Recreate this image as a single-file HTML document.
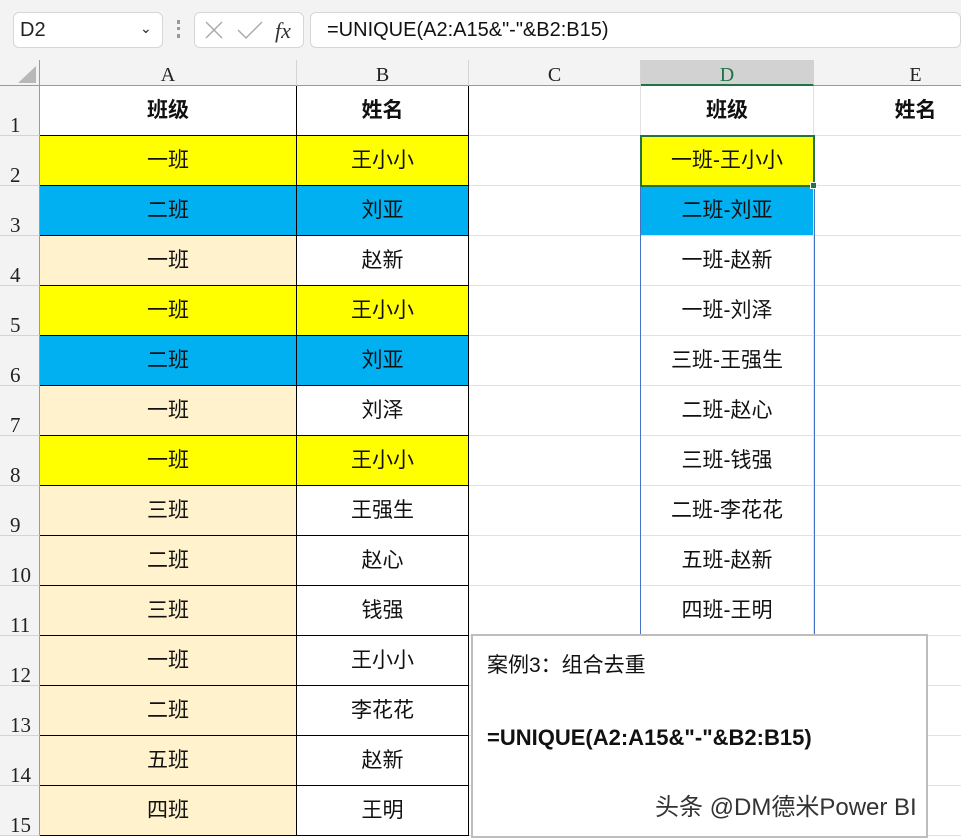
<!DOCTYPE html>
<html><head><meta charset="utf-8"><style>
*{margin:0;padding:0;box-sizing:border-box}
body{width:961px;height:838px;background:#fff;position:relative;overflow:hidden;font-family:"Liberation Sans","Noto Sans CJK SC",sans-serif}
.a{position:absolute}
.top{left:0;top:0;width:961px;height:60px;background:#f3f3f3}
.box{background:#fff;border:1px solid #d6d6d6;border-radius:6px}
.ch{top:60px;height:26px;background:#f3f3f3;border-right:1px solid #d4d4d4;border-bottom:1px solid #9a9a9a;text-align:center;font-family:"Liberation Serif",serif;font-size:20px;line-height:30px;color:#222}
.rh{left:0;width:40px;height:50px;background:#f3f3f3;border-bottom:1px solid #d4d4d4;border-right:1px solid #9a9a9a;font-family:"Liberation Serif",serif;font-size:21px;color:#222;padding-left:10px;padding-top:27px}
.c{height:50px;text-align:center;font-size:21px;line-height:50px;color:#111}
.g{border-bottom:1px solid #e1e1e1;border-right:1px solid #e1e1e1}
.k{border-bottom:1px solid #000;border-right:1px solid #000}
b{font-weight:bold}
</style></head><body>
<div class="a top"></div>
<div class="a box" style="left:13px;top:12px;width:150px;height:36px;font-size:20px;line-height:34px;padding-left:6px;color:#222">D2<span class="a" style="left:126px;top:-2px;font-size:14px">&#8964;</span></div>
<div class="a" style="left:177px;top:20px;width:3px;height:18px;border-left:3px dotted #999"></div>
<div class="a box" style="left:194px;top:12px;width:110px;height:36px"></div>
<svg class="a" style="left:200px;top:18px" width="100" height="26"><path d="M6 4L22 20M22 4L6 20" stroke="#aaa" stroke-width="1.5"/><path d="M38 12L46 20L62 4" stroke="#aaa" stroke-width="1.5" fill="none"/><text x="75" y="20" font-family="Liberation Serif" font-style="italic" font-size="22" fill="#333">fx</text></svg>
<div class="a box" style="left:310px;top:12px;width:651px;height:36px;font-size:20px;line-height:34px;padding-left:16px;color:#111">=UNIQUE(A2:A15&amp;"-"&amp;B2:B15)</div>
<div class="a" style="left:0;top:60px;width:40px;height:26px;background:#f3f3f3;border-right:1px solid #9a9a9a;border-bottom:1px solid #9a9a9a"></div>
<svg class="a" style="left:16px;top:64px" width="22" height="20"><path d="M20 2L20 19L2 19Z" fill="#b8b8b8"/></svg>
<div class="a ch" style="left:40px;width:257px">A</div>
<div class="a ch" style="left:297px;width:172px">B</div>
<div class="a ch" style="left:469px;width:172px">C</div>
<div class="a ch" style="left:641px;width:173px;background:#d2d2d2;border-bottom:2px solid #217346;color:#217346">D</div>
<div class="a ch" style="left:814px;width:204px">E</div>
<div id="g"></div>
<script>
var A=["班级","一班","二班","一班","一班","二班","一班","一班","三班","二班","三班","一班","二班","五班","四班"];
var B=["姓名","王小小","刘亚","赵新","王小小","刘亚","刘泽","王小小","王强生","赵心","钱强","王小小","李花花","赵新","王明"];
var D=["班级","一班-王小小","二班-刘亚","一班-赵新","一班-刘泽","三班-王强生","二班-赵心","三班-钱强","二班-李花花","五班-赵新","四班-王明"];
var Y="#ffff00",U="#00b0f0",C="#fff2cc";
var ac=["#fff",Y,U,C,Y,U,C,Y,C,C,C,C,C,C,C];
var bc=["#fff",Y,U,"#fff",Y,U,"#fff",Y,"#fff","#fff","#fff","#fff","#fff","#fff","#fff"];
var h="";
for(var i=0;i<15;i++){var t=86+i*50;
h+='<div class="a rh" style="top:'+t+'px">'+(i+1)+'</div>';
var w=i==0?'<b>':'',we=i==0?'</b>':'';
h+='<div class="a c k" style="left:40px;top:'+t+'px;width:257px;background:'+ac[i]+'">'+w+A[i]+we+'</div>';
h+='<div class="a c k" style="left:297px;top:'+t+'px;width:172px;background:'+bc[i]+'">'+w+B[i]+we+'</div>';
h+='<div class="a c g" style="left:469px;top:'+t+'px;width:172px"></div>';
var dbg=i==1?Y:(i==2?U:"#fff");
h+='<div class="a c g" style="left:641px;top:'+t+'px;width:173px;background:'+dbg+'">'+(D[i]?(w+D[i]+we):'')+'</div>';
h+='<div class="a c g" style="left:814px;top:'+t+'px;width:204px">'+(i==0?'<b>姓名</b>':'')+'</div>';
}
h+='<div class="a" style="left:640px;top:186px;width:175px;height:450px;border-left:1px solid #4472c4;border-right:1px solid #4472c4"></div>';
h+='<div class="a" style="left:640px;top:135px;width:175px;height:52px;border:2px solid #217346"></div>';
h+='<div class="a" style="left:810px;top:182px;width:7px;height:7px;background:#217346;border:1px solid #fff"></div>';
h+='<div class="a" style="left:471px;top:634px;width:457px;height:204px;background:#fff;border:2px solid #bdbdbd"></div>';
h+='<div class="a" style="left:487px;top:649px;font-size:21px;color:#111">案例3：组合去重</div>';
h+='<div class="a" style="left:487px;top:725px;font-size:22px;font-weight:bold;color:#111">=UNIQUE(A2:A15&amp;"-"&amp;B2:B15)</div>';
h+='<div class="a" style="left:655px;top:787px;font-size:24px;color:#333;text-shadow:0 0 2px #fff;white-space:nowrap">头条 @DM德米Power BI</div>';
document.getElementById("g").innerHTML=h;
</script>
</body></html>
